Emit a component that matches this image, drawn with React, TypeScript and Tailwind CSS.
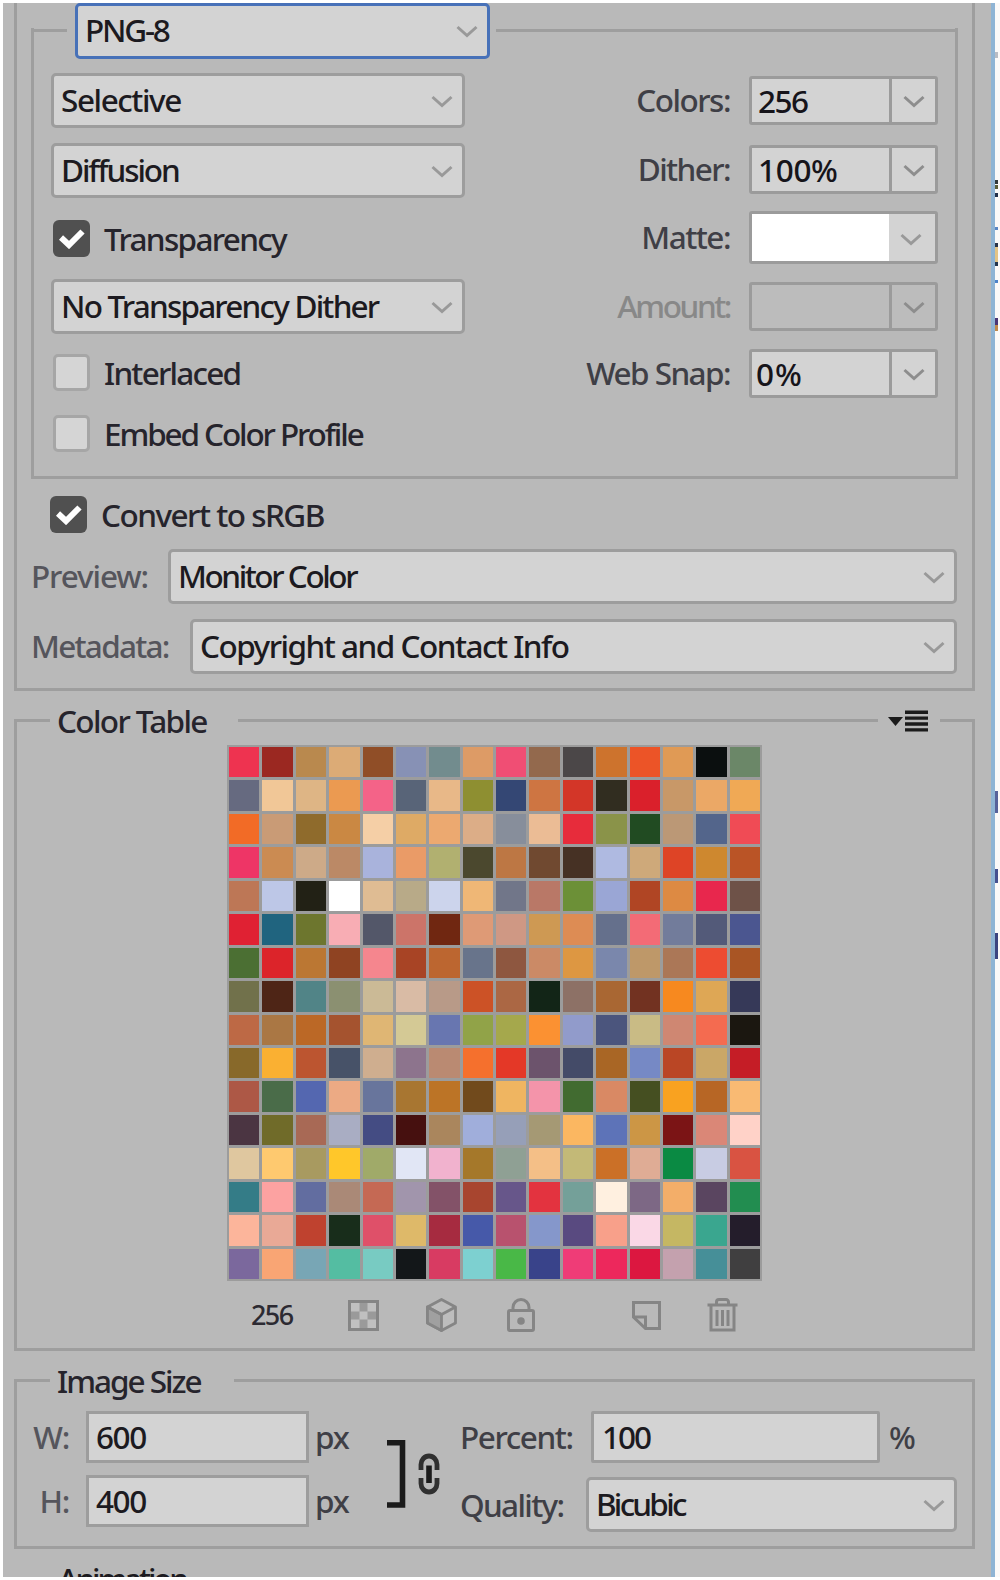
import * as React from "react"
import clsx from "clsx"

const SWATCHES = [
    "ee3350 9b2821 b9894e dcab76 904e27 8791b5 728c8e dd9b66 f04e74 93694d 4b4748 cd732d ec5427 e09a55 0b0f0f 6b8768",
    "666a80 f1c797 deb585 eb9a51 f46388 586478 e8b888 8e8f31 344774 ce7542 d33628 312d20 da202b c89868 eba866 f0a955",
    "f26b26 c99b76 8f6b2c ca8843 f5cfa6 deaa65 eca970 dcad87 878e9b ebbc95 e72c3b 8a9349 214b22 bb9876 53658b f04b55",
    "ee3566 cb8b52 cdaa88 bb8966 a9b3dc ea9b67 b1b070 4b482e bd7744 704930 463124 afbae1 cea97a de4426 ce882f ba5426",
    "bd7756 bdc7e7 222115 ffffff dfbc93 b8aa88 ccd4ec efb776 717689 b97867 6c9037 9aa6d5 b04524 dd8a43 e8274d 6e5248",
    "e02133 20647f 6d762e f8adb4 535769 cc7469 702711 de9a76 cf9884 ce9953 dd8c54 65708c f36b76 727c9b 535a79 4b5690",
    "4b6f33 dc242a bb7733 8f4322 f5868e a84425 bc6630 68748b 8e5740 cb8a66 dd9742 7a87ac be9869 ab7757 ed4c31 a95524",
    "71714b 4e2516 518487 8b9071 cbba96 d9bba5 b89a88 cc5226 ab6744 122517 8d7166 a96733 723221 f7891f dea755 363958",
    "bd6945 aa7744 bb6826 a5532f dfb674 d4c995 6876b0 91a348 a5a84c fb9132 919bcb 4b557d c9bb85 cf8772 f46b50 1b1710",
    "88692a fab032 bc5530 475268 cfae8f 8d748d ba8a72 f5702d e43827 6c536c 444b68 a96625 7689c5 ba4625 caa767 c51d26",
    "ad5846 4a6c49 5467b0 ecaa84 68759c a87631 bc7426 714a1c efb561 f494aa 416b30 d98964 454f21 f9a220 b76625 f9ba73",
    "4b3542 706b29 a86955 a9adc3 444c83 46100f aa865d a0aedb 969fb8 a59974 fbb761 5d73b8 cc9645 7b1415 da8777 ffd2c8",
    "dfc79f fec96f a89a60 ffc72a a0aa69 e1e6f5 f1b2ce a5782a 8fa094 f4bf87 c3b977 cb7027 dfac95 0a8a43 c8cce3 d95342",
    "347c87 fca2a1 626da0 aa8977 c56954 a195ac 835268 a8452f 67568a e3333f 74a099 fff0e0 7d6885 f3ae69 5a4560 228d50",
    "fcb59b e9a996 bf422f 182d1b df5069 deb969 a62b40 4659a9 b8526e 8597cb 594a80 f8a08a fad8e6 c5b763 3aa68f 241d2b",
    "7b689d f9a574 78a6b5 54bda2 78cbc2 131719 d83b62 7dd0d0 49b847 39438a ef3c77 ed285c dc1740 c4a1ae 468f98 403f40",
].map((row) => row.split(" "))

interface TextProps {
    children: React.ReactNode
    className?: string
}

function Text({ children, className }: TextProps) {
    return <span className={clsx("block whitespace-nowrap leading-10", className)}>{children}</span>
}

function Chevron({ className }: { className?: string }) {
    return (
        <svg viewBox="0 0 22 14" className={clsx("h-3.5 w-[22px] shrink-0", className)} fill="none" stroke="currentColor" strokeWidth="3">
            <path d="M1.5 3 L11 11.5 L20.5 3" />
        </svg>
    )
}

interface SelectProps {
    value: string
    className?: string
    textClass?: string
    focused?: boolean
}

function Select({ value, className, textClass, focused }: SelectProps) {
    return (
        <div
            className={clsx(
                "flex shrink-0 items-center justify-between rounded-[5px] border-[3px] bg-[#d3d3d3] pl-[7px] pr-[9px]",
                focused ? "border-[#4771b8]" : "border-[#9d9d9d]",
                className
            )}
        >
            <Text className={clsx("-mt-0.5 text-[#1c1a20]", textClass)}>{value}</Text>
            <Chevron className="text-[#999999]" />
        </div>
    )
}

interface ComboProps {
    label: string
    value?: string
    className?: string
    labelClass?: string
    valueClass?: string
    disabled?: boolean
}

function Combo({ label, value, className, labelClass, valueClass, disabled }: ComboProps) {
    return (
        <div className={clsx("flex items-center justify-end gap-[19px]", className)}>
            <Text className={clsx("-mt-0.5", disabled ? "text-[#888888]" : "text-[#3f3f46]", labelClass)}>{label}</Text>
            <div className={clsx("flex h-full w-[189px] rounded-[3px] border-[3px] border-[#9b9b9b]", disabled ? "bg-[#bcbcbc]" : "bg-[#d3d3d3]")}>
                <div className="flex w-[137px] items-center pl-[6px]">
                    <Text className={clsx("text-[#16141a]", valueClass)}>{value}</Text>
                </div>
                <div className="flex flex-1 items-center justify-center border-l-[3px] border-[#9b9b9b]">
                    <Chevron className="w-5 text-[#8d8d8d]" />
                </div>
            </div>
        </div>
    )
}

interface CheckProps {
    label: string
    checked?: boolean
    className?: string
    textClass?: string
}

function Check({ label, checked, className, textClass }: CheckProps) {
    return (
        <div className={clsx("flex h-[37px] items-center gap-[14px]", className)}>
            {checked ? (
                <span className="flex size-[37px] items-center justify-center rounded-[6px] bg-[#505050]">
                    <svg viewBox="0 0 26 20" className="h-5 w-[26px]" fill="none" stroke="#fff" strokeWidth="6">
                        <path d="M2 8.5 L10 16 L23.5 2.5" />
                    </svg>
                </span>
            ) : (
                <span className="size-[37px] rounded-[5px] border-[3px] border-[#a6a6a6] bg-[#d5d5d5]" />
            )}
            <Text className={clsx("text-[#26242c]", textClass)}>{label}</Text>
        </div>
    )
}

function Rule({ className }: { className?: string }) {
    return <span className={clsx("h-[3px] bg-[#9e9e9e]", className)} />
}

function SizeField({ label, value }: { label: string; value: string }) {
    return (
        <div className="flex h-[52px] items-center">
            <Text className="w-[52px] text-right text-[#55555c] tracking-[-0.04em]">{label}</Text>
            <div className="ml-[17px] flex h-full w-[223px] items-center border-[3px] border-[#9d9d9d] bg-[#d3d3d3] pl-[7px]">
                <Text className="text-[#1c1a20] tracking-[-0.045em]">{value}</Text>
            </div>
            <Text className="ml-[6px] text-[#3f3f46] tracking-[-0.04em]">px</Text>
        </div>
    )
}

function TableIcons() {
    return (
        <div className="flex items-center text-[#858585]">
            <Text className="w-[46px] text-[27px] text-[#2c2a32] tracking-[-0.06em]">256</Text>
            <svg viewBox="0 0 31 31" className="ml-[51px] size-[31px]">
                <rect x="1.5" y="1.5" width="28" height="28" fill="#c0c0c0" stroke="currentColor" strokeWidth="3" />
                <path d="M11.5 3h8v8.5h-8z M3 11.5h8.5v8H3z M19.5 11.5H28v8h-8.5z M11.5 19.5h8V28h-8z" fill="#9a9a9a" />
            </svg>
            <svg viewBox="0 0 31 34" className="ml-[47px] h-[34px] w-[31px]" fill="none" stroke="currentColor" strokeWidth="2.8" strokeLinejoin="round">
                <path d="M15.5 1.5 L29.5 9 V25 L15.5 32.5 L1.5 25 V9 Z" fill="#bdbdbd" />
                <path d="M15.5 16.5 V32.5 L1.5 25 V9 Z" fill="#a0a0a0" />
                <path d="M1.5 9 L15.5 16.5 L29.5 9" />
            </svg>
            <svg viewBox="0 0 28 34" className="ml-[50px] h-[34px] w-7" fill="none" stroke="currentColor" strokeWidth="3">
                <rect x="1.5" y="12.5" width="25" height="20" rx="1.5" />
                <path d="M6 12.5 V9.5 a8 8 0 0 1 16 0 V12.5" />
                <circle cx="14" cy="23" r="3.8" fill="currentColor" stroke="none" />
            </svg>
            <svg viewBox="0 0 29 29" className="ml-[97px] size-[29px]" fill="none" stroke="currentColor" strokeWidth="3">
                <path d="M1.5 16 V1.5 H27.5 V27.5 H13.5 Z" />
                <path d="M1.5 16 H13.5 V27.5" />
            </svg>
            <svg viewBox="0 0 31 34" className="ml-[46px] h-[34px] w-[31px]" fill="none" stroke="currentColor" strokeWidth="3">
                <path d="M0.5 7 H30.5 M9.5 7 V4 a2.5 2.5 0 0 1 2.5-2.5 h7 a2.5 2.5 0 0 1 2.5 2.5 V7 M4 7 V32 H27 V7" />
                <path d="M10 12 V28 M15.5 12 V28 M21 12 V28" />
            </svg>
        </div>
    )
}

// slivers of the window behind the panel
const SLIVERS = [
    "mt-[49px] h-[6px] bg-[#b9bcc4]",
    "mt-[122px] h-[4px] bg-[#30383a]",
    "mt-[1px] h-[4px] bg-[#5b5f3a]",
    "mt-[4px] h-[4px] bg-[#22304a]",
    "mt-[30px] h-[3px] bg-[#5a86c4]",
    "mt-[13px] h-[4px] bg-[#2a3448]",
    "mt-0 h-[15px] bg-[#e3c487]",
    "mt-0 h-[4px] bg-[#24364e]",
    "mt-[14px] h-[3px] bg-[#4d83c9]",
    "mt-[35px] h-[7px] bg-[#4b3676]",
    "mt-0 h-[6px] bg-[#c08a4c]",
    "mt-[460px] h-[22px] bg-[#57629a]",
    "mt-[56px] h-[14px] bg-[#46518f]",
    "mt-[50px] h-[26px] bg-[#3c447f]",
]

export default function App() {
    return (
        <div className="flex h-[1580px] w-[1000px] overflow-hidden bg-white py-[3px] pl-[3px] font-['Noto_Sans','Open_Sans',sans-serif] text-[31.5px] font-medium">
            <div className="flex w-[988px] shrink-0 flex-col overflow-hidden bg-[#b9b9b9] pl-[11px]">
                {/* optimisation settings */}
                <div className="h-[688px] w-[961px] shrink-0 border-x-[3px] border-b-[3px] border-[#9e9e9e] pl-[14px]">
                    <div className="flex h-[56px] items-center">
                        <Rule className="-mt-0.5 w-9" />
                        <Select focused value="PNG-8" className="ml-2 h-[56px] w-[415px]" textClass="tracking-[-0.07em]" />
                        <Rule className="ml-[6px] -mt-0.5 w-[461px]" />
                    </div>
                    <div className="-mt-[31px] flex h-[451px] w-[927px] justify-between border-x-[3px] border-b-[3px] border-[#9e9e9e] pl-[17px] pr-[17px]">
                        <div className="pt-[45px]">
                            <Select value="Selective" className="h-[55px] w-[414px]" textClass="tracking-[-0.045em]" />
                            <Select value="Diffusion" className="mt-[15px] h-[55px] w-[414px]" textClass="tracking-[-0.067em]" />
                            <Check checked label="Transparency" className="ml-0.5 mt-[22px]" textClass="tracking-[-0.053em]" />
                            <Select value="No Transparency Dither" className="mt-[22px] h-[55px] w-[414px]" textClass="tracking-[-0.057em]" />
                            <Check label="Interlaced" className="ml-0.5 mt-[20px]" textClass="tracking-[-0.056em]" />
                            <Check label="Embed Color Profile" className="ml-0.5 mt-[24px]" textClass="tracking-[-0.067em]" />
                        </div>
                        <div className="pt-[48px]">
                            <Combo label="Colors:" value="256" className="h-[49px]" labelClass="tracking-[-0.047em]" valueClass="tracking-[-0.05em]" />
                            <Combo label="Dither:" value="100%" className="mt-5 h-[49px]" labelClass="tracking-[-0.05em]" valueClass="tracking-[-0.01em]" />
                            <div className="mt-[17px] flex h-[53px] items-center justify-end gap-[19px]">
                                <Text className="-mt-0.5 text-[#3f3f46] tracking-[-0.048em]">Matte:</Text>
                                <div className="flex h-full w-[189px] rounded-[3px] border-[3px] border-[#9b9b9b] bg-[#d3d3d3]">
                                    <div className="w-[137px] bg-white" />
                                    <div className="flex flex-1 items-center pl-[11px] pt-0.5">
                                        <Chevron className="text-[#999999]" />
                                    </div>
                                </div>
                            </div>
                            <Combo disabled label="Amount:" className="mt-[18px] h-[49px]" labelClass="tracking-[-0.077em]" />
                            <Combo label="Web Snap:" value="0%" className="mt-[18px] h-[49px]" labelClass="tracking-[-0.05em]" valueClass="-ml-[2px] tracking-[0.03em]" />
                        </div>
                    </div>
                    <Check checked label="Convert to sRGB" className="ml-[19px] mt-[17px]" textClass="tracking-[-0.048em]" />
                    <div className="mt-[16px] flex w-[926px] items-center justify-between">
                        <Text className="-mt-0.5 text-[#55555c] tracking-[-0.035em]">Preview:</Text>
                        <Select value="Monitor Color" className="h-[55px] w-[789px]" textClass="tracking-[-0.077em]" />
                    </div>
                    <div className="mt-[15px] flex w-[926px] items-center justify-between">
                        <Text className="-mt-0.5 text-[#55555c] tracking-[-0.055em]">Metadata:</Text>
                        <Select value="Copyright and Contact Info" className="h-[55px] w-[767px] pl-2" textClass="tracking-[-0.048em]" />
                    </div>
                </div>

                {/* color table */}
                <div className="mt-[28px] flex h-[3px] w-[961px] shrink-0 items-center">
                    <Rule className="w-9" />
                    <Text className="ml-[7px] w-[181px] text-[#26242c] tracking-[-0.052em]">Color Table</Text>
                    <Rule className="flex-1" />
                    <svg viewBox="0 0 40 22" className="ml-[10px] mr-[12px] h-[22px] w-10" fill="#1b1b1b">
                        <path d="M0 7 H15 L7.5 16 Z" />
                        <path d="M17 0.5h23v3.4H17z M17 6.4h23v3.4H17z M17 12.3h23v3.4H17z M17 18.2h23v3.4H17z" />
                    </svg>
                    <Rule className="w-[35px]" />
                </div>
                <div className="h-[629px] w-[961px] shrink-0 border-x-[3px] border-b-[3px] border-[#9e9e9e] pl-[210px] pt-[23px]">
                    <div className="grid h-[536px] w-[535px] grid-cols-16 grid-rows-16 gap-[3px] bg-[#9c9c9c] p-[2px]">
                        {SWATCHES.flat().map((hex, i) => (
                            <div key={i} style={{ backgroundColor: `#${hex}` }} />
                        ))}
                    </div>
                    <div className="ml-[24px] mt-[14px]">
                        <TableIcons />
                    </div>
                </div>

                {/* image size */}
                <div className="mt-[28px] flex h-[3px] w-[961px] shrink-0 items-center">
                    <Rule className="w-9" />
                    <Text className="ml-[7px] w-[177px] text-[#26242c] tracking-[-0.064em]">Image Size</Text>
                    <Rule className="flex-1" />
                </div>
                <div className="flex h-[167px] w-[961px] shrink-0 border-x-[3px] border-b-[3px] border-[#9e9e9e]">
                    <div className="w-[334px] pt-[29px]">
                        <SizeField label="W:" value="600" />
                        <div className="h-3" />
                        <SizeField label="H:" value="400" />
                    </div>
                    <svg viewBox="0 0 54 68" className="ml-9 mt-[58px] h-[68px] w-[54px]" fill="none" stroke="#1b1b1b">
                        <path d="M0 2.7 H15.5 V65 H0" strokeWidth="5.6" />
                        <path d="M34 30 V24.5 a8 8.5 0 0 1 16 0 V30 M34 38 V43.5 a8 8.5 0 0 0 16 0 V38" strokeWidth="4.8" stroke="#303030" />
                        <path d="M42 25.5 V43" strokeWidth="5.6" />
                    </svg>
                    <div className="ml-5 w-[497px] pt-[29px]">
                        <div className="flex h-[52px] items-center">
                            <Text className="-ml-px w-[131px] text-[#3f3f46] tracking-[-0.045em]">Percent:</Text>
                            <div className="flex h-full w-[289px] items-center rounded-[2px] border-[3px] border-[#9d9d9d] bg-[#d3d3d3] pl-[8px]">
                                <Text className="text-[#1c1a20] tracking-[-0.065em]">100</Text>
                            </div>
                            <Text className="ml-[9px] text-[#3f3f46]">%</Text>
                        </div>
                        <div className="mt-[14px] flex items-center">
                            <Text className="-ml-px w-[126px] text-[#3f3f46] tracking-[-0.053em]">Quality:</Text>
                            <Select value="Bicubic" className="h-[55px] w-[371px]" textClass="tracking-[-0.087em]" />
                        </div>
                    </div>
                </div>

                {/* next section, cut off by the panel's edge */}
                <Text className="ml-[44px] mt-[10px] text-[#1c1a20] tracking-[-0.1em]">Animation</Text>
            </div>
            <div className="w-[4px] shrink-0 bg-[#8fb4d4]" />
            <div className="flex-1 bg-[#fbf9f8]">
                {SLIVERS.map((cls, i) => (
                    <div key={i} className="flow-root w-[3px]">
                        <div className={cls} />
                    </div>
                ))}
            </div>
        </div>
    )
}
